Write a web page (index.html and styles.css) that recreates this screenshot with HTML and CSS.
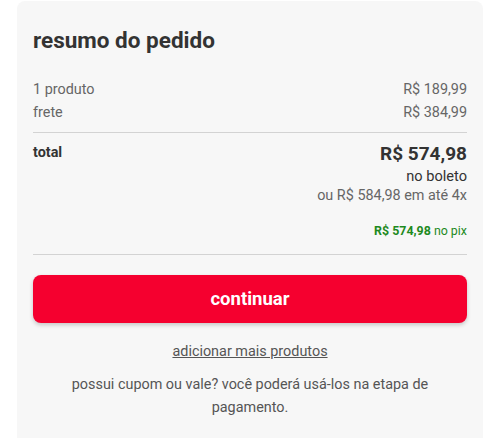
FILE: index.html
```html
<!DOCTYPE html>
<html lang="pt-BR">
  <head>
    <meta charset="UTF-8" />
    <meta name="viewport" content="width=device-width, initial-scale=1.0" />
    <title>resumo do pedido</title>
    <link rel="stylesheet" href="styles.css">
  </head>
  <body>
    <div class="resumo">
      <h2 class="resumo_titulo">resumo do pedido</h2>

      <div class="linhas">
        <div class="linha">
          <span>1 produto</span>
          <span>R$ 189,99</span>
        </div>
        <div class="linha">
          <span>frete</span>
          <span>R$ 384,99</span>
        </div>
      </div>

      <div class="total">
        <span class="total_label">total</span>
        <div class="total_valores">
          <span class="total_preco">R$ 574,98</span>
          <span class="total_boleto">no boleto</span>
          <span class="total_parcelas">ou R$ 584,98 em até 4x</span>
          <span class="total_pix"><b>R$ 574,98</b> no pix</span>
        </div>
      </div>

      <button class="continuar">continuar</button>

      <a class="adicionar" href="#">adicionar mais produtos</a>

      <p class="cupom">
        possui cupom ou vale? você poderá usá-los na etapa de pagamento.
      </p>
    </div>
  </body>
</html>
```

FILE: styles.css
```css
body {
  margin: 0;
  background-color: #fff;
  font-family: Roboto, "Liberation Sans", sans-serif;
}

.resumo {
  margin: 1px 17px 0 17px;
  padding: 24px 16px 40px 16px;
  background-color: #f7f7f7;
  border-radius: 8px;
}

.resumo_titulo {
  margin: 0 0 23px 0;
  font-size: 22.5px;
  font-weight: 700;
  line-height: 30px;
  color: #333;
}

.linhas {
  padding-bottom: 8px;
  border-bottom: 1px solid #d3d3d3;
}

.linha {
  display: flex;
  justify-content: space-between;
  font-size: 14.4px;
  line-height: 23px;
  color: #666;
}

.total {
  display: flex;
  justify-content: space-between;
  padding: 9px 0 14px 0;
  border-bottom: 1px solid #d3d3d3;
}

.total_label {
  font-size: 14.4px;
  font-weight: 700;
  color: #333;
  line-height: 22px;
}

.total_valores {
  display: flex;
  flex-direction: column;
  align-items: flex-end;
}

.total_preco {
  font-size: 19px;
  font-weight: 700;
  color: #333;
  line-height: 24px;
}

.total_boleto {
  font-size: 14.6px;
  color: #333;
  line-height: 20px;
}

.total_parcelas {
  font-size: 14.4px;
  color: #666;
  line-height: 20px;
}

.total_pix {
  margin-top: 16px;
  font-size: 12.4px;
  color: #1e8a1e;
  line-height: 18px;
}

.continuar {
  display: block;
  width: 100%;
  height: 48px;
  margin-top: 20px;
  border: 0;
  border-radius: 8px;
  background-color: #f5002f;
  color: #fff;
  font-family: Roboto, "Liberation Sans", sans-serif;
  font-size: 18.5px;
  font-weight: 700;
  box-shadow: 0 2px 4px rgba(0, 0, 0, 0.2);
}

.adicionar {
  display: block;
  width: fit-content;
  margin: 19px auto 0 auto;
  font-size: 14.4px;
  line-height: 20px;
  color: #555;
}

.cupom {
  margin: 11px 10px 0 10px;
  text-align: center;
  font-size: 14.4px;
  line-height: 23px;
  color: #555;
}
```
